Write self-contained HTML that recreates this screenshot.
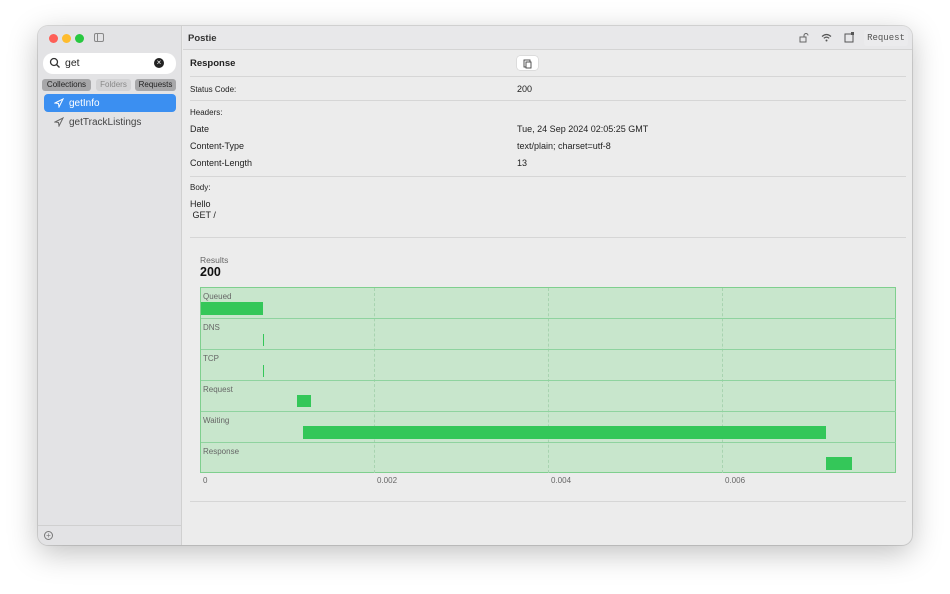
<!DOCTYPE html>
<html><head><style>
*{margin:0;padding:0;box-sizing:border-box}
body{width:950px;height:594px;background:#fff;font-family:"Liberation Sans",sans-serif;position:relative;overflow:hidden;color:#222}
.win{position:absolute;left:38px;top:26px;width:874px;height:519px;border-radius:10px;overflow:hidden;box-shadow:0 8px 30px rgba(0,0,0,.25),0 0 0 1px rgba(0,0,0,.12);background:#ececec}
.side{position:absolute;left:0;top:0;width:144px;height:519px;background:#e3e3e5;border-right:1px solid #d0d0d0}
.abs{position:absolute}
.t{position:absolute;font-size:9px;white-space:nowrap}
.hl{position:absolute;height:1px;background:#d6d6d6}
.row{position:absolute;left:0;width:695px;height:31px;border-bottom:1px solid #8fd39f}
.lbl{position:absolute;left:2px;top:4px;font-size:8px;color:#666}
.bar{position:absolute;background:#34c759}
</style></head><body>
<div class="win">
 <div class="side">
  <div class="abs" style="left:11px;top:8px;width:9px;height:9px;border-radius:50%;background:#fe5f57"></div>
  <div class="abs" style="left:24px;top:8px;width:9px;height:9px;border-radius:50%;background:#febc2e"></div>
  <div class="abs" style="left:37px;top:8px;width:9px;height:9px;border-radius:50%;background:#28c840"></div>
  <div class="abs" style="left:56px;top:7px;width:10px;height:9px;border:1px solid #888;border-radius:2px"></div>
  <div class="abs" style="left:59px;top:7px;width:1px;height:9px;background:#888"></div>
  <div class="abs" style="left:5px;top:27px;width:133px;height:21px;background:#fff;border-radius:10px"></div>
  <svg class="abs" style="left:11px;top:31px" width="12" height="12"><circle cx="5" cy="5" r="3.5" fill="none" stroke="#333" stroke-width="1.3"/><line x1="7.5" y1="7.5" x2="10.5" y2="10.5" stroke="#333" stroke-width="1.3"/></svg>
  <div class="t" style="left:27px;top:31px;font-size:10.5px;color:#222">get</div>
  <div class="abs" style="left:116px;top:32px;width:10px;height:10px;border-radius:50%;background:#222;color:#fff;font-size:8px;line-height:10px;text-align:center">×</div>
  <div class="abs" style="left:4px;top:53px;width:49px;height:12px;background:#a7a7a9;border-radius:3px;font-size:8px;line-height:12px;text-align:center;color:#222">Collections</div>
  <div class="abs" style="left:58px;top:53px;width:35px;height:12px;background:#d3d3d5;border-radius:3px;font-size:8px;line-height:12px;text-align:center;color:#888">Folders</div>
  <div class="abs" style="left:97px;top:53px;width:41px;height:12px;background:#a7a7a9;border-radius:3px;font-size:8px;line-height:12px;text-align:center;color:#222">Requests</div>
  <div class="abs" style="left:6px;top:68px;width:132px;height:18px;background:#3b8ff1;border-radius:4px"></div>
  <svg class="abs" style="left:16px;top:72px" width="10" height="10"><path d="M1 5L9 1L5 9L4.5 5.5Z" fill="none" stroke="#fff" stroke-width="1"/></svg>
  <div class="t" style="left:31px;top:71.5px;font-size:10px;color:#fff">getInfo</div>
  <svg class="abs" style="left:16px;top:91px" width="10" height="10"><path d="M1 5L9 1L5 9L4.5 5.5Z" fill="none" stroke="#666" stroke-width="1"/></svg>
  <div class="t" style="left:31px;top:90.5px;font-size:10px;color:#444">getTrackListings</div>
  <div class="hl" style="left:0;top:499px;width:144px;background:#d0d0d0"></div>
  <div class="abs" style="left:6px;top:505px;width:9px;height:9px;border:1px solid #777;border-radius:50%;font-size:8px;line-height:7px;text-align:center;color:#777">+</div>
 </div>
 <div class="abs" style="left:145px;top:0;width:729px;height:24px;background:#e8e8ea;border-bottom:1px solid #d4d4d4"></div>
 <div class="t" style="left:150px;top:7px;font-size:9.5px;font-weight:bold;color:#333">Postie</div>
 <svg class="abs" style="left:761px;top:7px" width="10" height="10"><rect x="1" y="4" width="6" height="5" fill="none" stroke="#666"/><path d="M5 4V2.5a2 2 0 0 1 4 0" fill="none" stroke="#666"/></svg>
 <svg class="abs" style="left:783px;top:7px" width="11" height="9"><path d="M1 3.5Q5.5 -0.5 10 3.5M2.8 5.3Q5.5 3 8.2 5.3" fill="none" stroke="#555" stroke-width="1.2"/><circle cx="5.5" cy="7.5" r="1" fill="#555"/></svg>
 <svg class="abs" style="left:806px;top:6px" width="11" height="11"><rect x="1" y="2" width="8" height="8" fill="none" stroke="#555"/><rect x="7" y="0" width="3" height="3" fill="#555"/></svg>
 <div class="abs" style="left:826px;top:4px;width:44px;height:16px;background:#ebebed;border-radius:3px;font-family:'Liberation Mono',monospace;font-size:9px;line-height:16px;text-align:center;color:#555">Request</div>
 <div class="t" style="left:152px;top:32px;font-size:9.5px;font-weight:bold;color:#222">Response</div>
 <div class="abs" style="left:479px;top:30px;width:21px;height:14px;background:#fff;border-radius:3px;box-shadow:0 0 0 .5px #ccc"></div>
 <svg class="abs" style="left:485px;top:32px" width="10" height="11"><rect x="1" y="2" width="6" height="7" fill="none" stroke="#444" stroke-width=".9"/><rect x="3" y="4" width="5" height="6" fill="#fff" stroke="#444" stroke-width=".9"/></svg>
 <div class="hl" style="left:152px;top:50px;width:716px"></div>
 <div class="t" style="left:152px;top:59px;font-size:8px">Status Code:</div>
 <div class="t" style="left:479px;top:58px;font-size:9px">200</div>
 <div class="hl" style="left:152px;top:74px;width:716px"></div>
 <div class="t" style="left:152px;top:82px;font-size:8px">Headers:</div>
 <div class="t" style="left:152px;top:98px;font-size:9px">Date</div>
 <div class="t" style="left:479px;top:98px;font-size:9px">Tue, 24 Sep 2024 02:05:25 GMT</div>
 <div class="t" style="left:152px;top:115px;font-size:9px">Content-Type</div>
 <div class="t" style="left:479px;top:115px;font-size:9px">text/plain; charset=utf-8</div>
 <div class="t" style="left:152px;top:132px;font-size:9px">Content-Length</div>
 <div class="t" style="left:479px;top:132px;font-size:9px">13</div>
 <div class="hl" style="left:152px;top:150px;width:716px"></div>
 <div class="t" style="left:152px;top:157px;font-size:8px">Body:</div>
 <div class="t" style="left:152px;top:173px;font-size:9px;line-height:10.5px">Hello<br>&nbsp;GET /</div>
 <div class="hl" style="left:152px;top:211px;width:716px"></div>
 <div class="t" style="left:162px;top:229px;font-size:8.5px;color:#666">Results</div>
 <div class="t" style="left:162px;top:239px;font-size:12.5px;font-weight:bold;color:#111">200</div>
 <div class="abs" style="left:162px;top:261px;width:696px;height:186px;background:#c8e6cc;border:1px solid #7fcf8e">
  <div class="abs" style="left:173px;top:0;height:185px;border-left:1px dashed #a8d3b0"></div>
  <div class="abs" style="left:347px;top:0;height:185px;border-left:1px dashed #a8d3b0"></div>
  <div class="abs" style="left:521px;top:0;height:185px;border-left:1px dashed #a8d3b0"></div>
  <div class="row" style="top:0"><div class="lbl">Queued</div><div class="bar" style="left:0;top:14px;width:62px;height:13px"></div></div>
  <div class="row" style="top:31px"><div class="lbl">DNS</div><div class="bar" style="left:62px;top:15px;width:1px;height:12px"></div></div>
  <div class="row" style="top:62px"><div class="lbl">TCP</div><div class="bar" style="left:62px;top:15px;width:1px;height:12px"></div></div>
  <div class="row" style="top:93px"><div class="lbl">Request</div><div class="bar" style="left:96px;top:14px;width:14px;height:12px"></div></div>
  <div class="row" style="top:124px"><div class="lbl">Waiting</div><div class="bar" style="left:102px;top:14px;width:523px;height:13px"></div></div>
  <div class="row" style="top:155px;border:none"><div class="lbl">Response</div><div class="bar" style="left:625px;top:14px;width:26px;height:13px"></div></div>
 </div>
 <div class="t" style="left:165px;top:450px;font-size:8px;color:#666">0</div>
 <div class="t" style="left:339px;top:450px;font-size:8px;color:#666">0.002</div>
 <div class="t" style="left:513px;top:450px;font-size:8px;color:#666">0.004</div>
 <div class="t" style="left:687px;top:450px;font-size:8px;color:#666">0.006</div>
 <div class="hl" style="left:152px;top:475px;width:716px"></div>
</div>
</body></html>
